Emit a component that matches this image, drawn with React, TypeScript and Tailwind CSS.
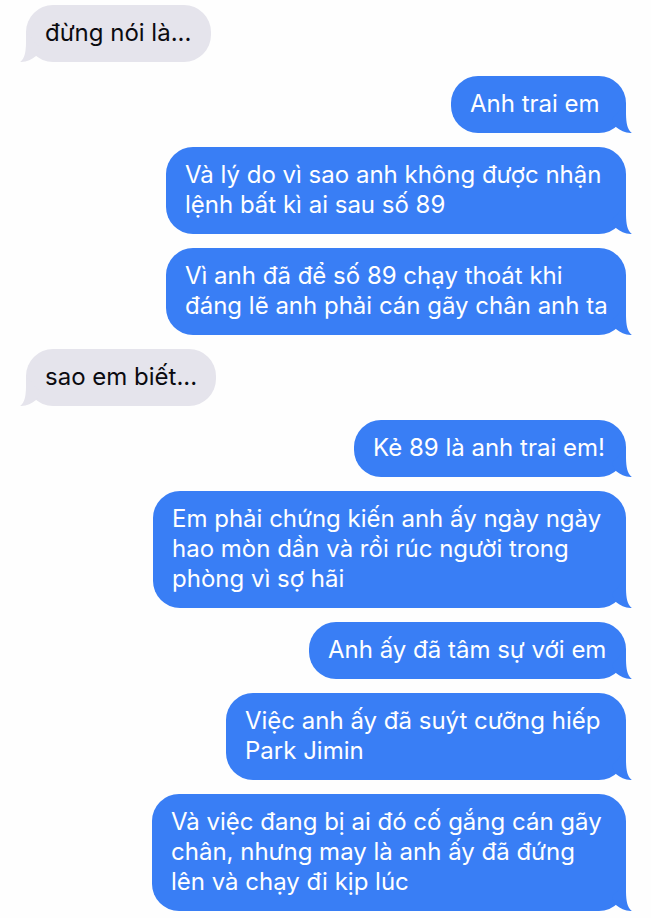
import React from 'react';
import clsx from 'clsx';

type Message = {
  id: number;
  sent: boolean;
  lines: string[];
  width: string;
};

const messages: Message[] = [
  { id: 1, sent: false, lines: ['đừng nói là...'], width: 'w-[185px]' },
  { id: 2, sent: true, lines: ['Anh trai em'], width: 'w-[175px]' },
  { id: 3, sent: true, lines: ['Và lý do vì sao anh không được nhận', 'lệnh bất kì ai sau số 89'], width: 'w-[460px]' },
  { id: 4, sent: true, lines: ['Vì anh đã để số 89 chạy thoát khi', 'đáng lẽ anh phải cán gãy chân anh ta'], width: 'w-[460px]' },
  { id: 5, sent: false, lines: ['sao em biết...'], width: 'w-[190px]' },
  { id: 6, sent: true, lines: ['Kẻ 89 là anh trai em!'], width: 'w-[272px]' },
  { id: 7, sent: true, lines: ['Em phải chứng kiến anh ấy ngày ngày', 'hao mòn dần và rồi rúc người trong', 'phòng vì sợ hãi'], width: 'w-[473px]' },
  { id: 8, sent: true, lines: ['Anh ấy đã tâm sự với em'], width: 'w-[317px]' },
  { id: 9, sent: true, lines: ['Việc anh ấy đã suýt cưỡng hiếp', 'Park Jimin'], width: 'w-[400px]' },
  { id: 10, sent: true, lines: ['Và việc đang bị ai đó cố gắng cán gãy', 'chân, nhưng may là anh ấy đã đứng', 'lên và chạy đi kịp lúc'], width: 'w-[474px]' },
];

function Tail({ sent }: { sent: boolean }) {
  return (
    <svg
      viewBox="0 0 24 32"
      aria-hidden="true"
      className={clsx(
        'absolute bottom-0 h-8 w-6',
        sent ? '-right-1.5 fill-[#397ef5]' : '-left-1.5 -scale-x-100 fill-[#e5e4ec]'
      )}
    >
      <path d="M18 2 V13 C18.2 22 19.2 28.6 23.8 31.9 C17.5 32.2 12.5 30 7.6 25.8 L4 18 Z" />
    </svg>
  );
}

function Bubble({ message }: { message: Message }) {
  return (
    <li
      className={clsx(
        'relative max-w-full rounded-[27px] pt-[13px] pb-[14px] pl-[19px] text-2xl leading-[30px] whitespace-nowrap',
        message.width,
        message.sent ? 'self-end bg-[#397ef5] text-white' : 'self-start bg-[#e5e4ec] text-[#0b0b10]'
      )}
    >
      <Tail sent={message.sent} />
      <p className="relative">
        {message.lines.map(line => (
          <span key={line} className="block">{line}</span>
        ))}
      </p>
    </li>
  );
}

export default function App() {
  return (
    <main className="min-h-screen bg-[#fefefe] pt-[5px] pr-[25px] pb-1.5 pl-[26px] font-['Inter','Noto_Sans',sans-serif]">
      <ul className="flex flex-col gap-[14px]">
        {messages.map(message => (
          <Bubble key={message.id} message={message} />
        ))}
      </ul>
    </main>
  );
}
